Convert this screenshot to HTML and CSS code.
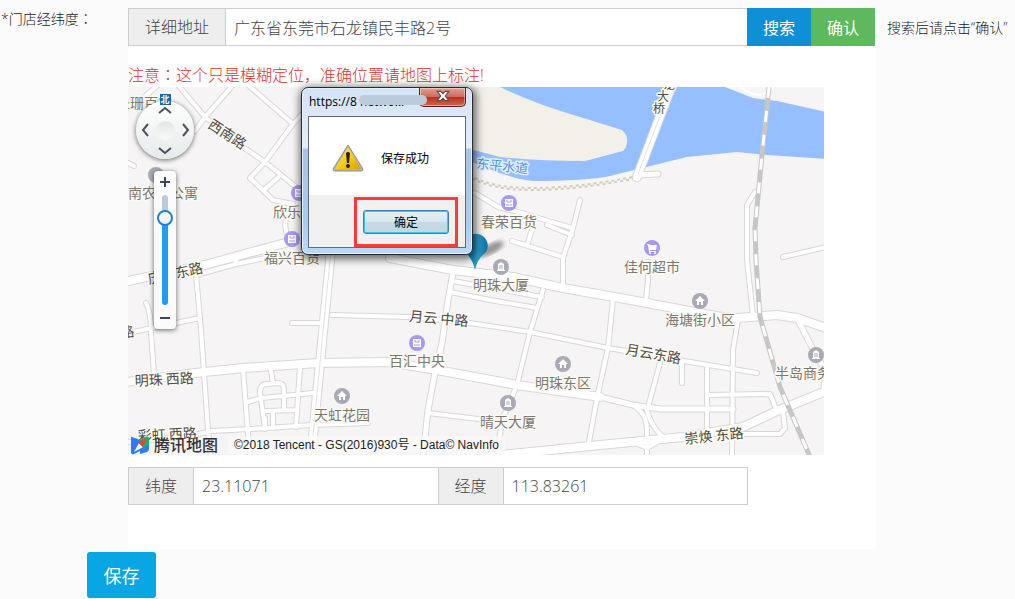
FILE: index.html
```html
<!DOCTYPE html>
<html lang="zh-CN">
<head>
    <meta charset="UTF-8">
    <meta name="viewport" content="width=device-width, initial-scale=1.0">
    <link rel="stylesheet" href="styles.css">
    <title>门店经纬度</title>
</head>
<body>
    <form class="store-form">
        <div class="form-row">
            <label class="form-label" for="address">*门店经纬度<span class="colon" lang="zh-TW">：</span></label>

            <div class="panel">
                <div class="input-group">
                    <label class="addon" for="address">详细地址</label>
                    <input type="text" id="address" value="广东省东莞市石龙镇民丰路2号">
                    <button type="button" class="btn btn-search">搜索</button>
                    <button type="button" class="btn btn-confirm">确认</button>
                </div>

                <p class="notice">注意<span class="colon" lang="zh-TW">：</span>这个只是模糊定位，准确位置请地图上标注!</p>

                <div class="map">
                    <svg class="map-canvas" viewBox="128 87 696 368">
                        <defs>
                            <filter id="soft"><feGaussianBlur stdDeviation="2"/></filter>
                            <linearGradient id="pinFill" x1="0" x2="1" y1="0" y2="0">
                                <stop offset="0" stop-color="#0d6fa5"/>
                                <stop offset="0.6" stop-color="#2c9fce"/>
                                <stop offset="1" stop-color="#0b6c9f"/>
                            </linearGradient>
                            <g id="streets">
                                <g class="lane">
                                    <path d="M158 85L140 101M128 163L134 166M178 85L205 117L243 147L265 162L306 195"/>
                                    <path d="M233 85L205 117L195 131M248 85L293 124M304 112L293 124L265 162L250 178L273 200L293 204M281 175L265 189"/>
                                    <path d="M286 218Q284 230 288 236M196 275L236 264L270 257M236 256V263"/>
                                    <path d="M196 274L201 330L208 430L211 457M146 303Q151 312 151 332L154 375M128 333L200 318M292 323H322"/>
                                    <path d="M332 315L410 317L463 322L530 332L608 348L678 360L757 373"/>
                                    <path d="M243 370L250 457M247 402L262 398L313 393M300 368L296 427M271 370L273 383M265 428L260 393Q260 384 266 384L278 383Q284 383 284 390V408M265 411L296 410M273 411V426M265 418V429"/>
                                    <path d="M128 442L195 435L211 431L268 428L311 425L368 423"/>
                                    <path d="M475 193L498 207L515 211L572 228M547 225L572 235M532 230L527 245M512 241L563 257M580 200L573 228L563 258V286"/>
                                    <path d="M453 281L542 297M450 292L490 300L537 308M543 290L530 332L517 385L502 420L497 457M428 413L487 420"/>
                                    <path d="M613 300L608 348L597 398L589 442M648 262V280L646 300M660 363L648 407M682 363V383M707 367V432"/>
                                    <path d="M755 192L747 205V260L753 316M783 257L826 247M738 320L733 350L732 457M707 395L770 394L777 411M783 412L785 428L780 434H743"/>
                                    <path d="M633 405Q647 414 647 430V457M646 407Q650 426 664 438M664 438L647 448L630 441"/>
                                </g>
                                <g class="road">
                                    <path d="M453 273L448 300L442 343L435 373L428 410L423 457"/>
                                    <path d="M600 397L633 405L660 409L733 409M797 318L817 357Q828 372 824 387M637 175L658 174"/>
                                </g>
                                <g class="avenue">
                                    <path d="M128 281L205 265L285 243L330 230M390 258L453 270L513 277L563 288L620 298L647 303L705 314Q725 318 737 318L777 315L797 318L826 328"/>
                                    <path d="M126 382L195 373L243 368L318 363L388 362L437 370L517 385L600 397"/>
                                    <path d="M490 456L600 445L683 437L743 427L777 411L826 391"/>
                                    <path d="M332 240L320 363L311 457M672 85L637 177"/>
                                </g>
                            </g>
                        </defs>

                        <rect class="land" x="128" y="87" width="696" height="368"/>
                        <path class="water" d="M470 87H725L753 98L777 101L826 112V159L767 155L737 152L687 157L610 176Q585 181 533 181Q510 179 470 161Z"/>
                        <path class="island" d="M470 87H500Q535 104 580 117L622 130Q628 136 627 141Q627 148 623 151L585 161Q540 161 500 157L470 149Z"/>
                        <path class="footpath" d="M470 175Q490 188 533 188T633 177"/>
                        <path class="footpath alt" d="M470 177Q490 190 533 190T633 179"/>
                        <path class="shore" d="M740 87Q762 103 774 86"/>

                        <use href="#streets" class="casing"/>
                        <use href="#streets" class="surface"/>
                        <path class="divider" d="M332 240L320 363L311 457M671 87L638 174"/>

                        <path class="rail" d="M769 87L762 155L755 228L756 260L760 317L780 387L810 457"/>
                        <path class="rail-dash" d="M769 87L762 155L755 228L756 260L760 317L780 387L810 457"/>

                        <!-- 图标 -->
                        <g class="poi shop">
                            <g id="bag">
                                <circle cx="299" cy="193" r="8"/>
                                <path class="glyph" d="M295 189H303V197H295Z"/>
                                <path class="clasp" d="M297 190V192H301V190M296 195H302"/>
                            </g>
                            <use href="#bag" x="-7" y="46"/>
                            <use href="#bag" x="210" y="10"/>
                            <use href="#bag" x="118" y="150"/>
                            <circle cx="652" cy="248" r="8"/>
                            <path class="glyph" d="M647 244H649L650 245H657L656 250H650V251H656V252H649L648 245H647Z"/>
                            <circle class="glyph" cx="650" cy="253" r="1"/>
                            <circle class="glyph" cx="655" cy="253" r="1"/>
                        </g>
                        <g class="poi place">
                            <circle cx="156" cy="175" r="8"/>
                            <g id="home">
                                <circle cx="700" cy="301" r="8"/>
                                <path class="glyph" d="M700 296L695 301H697V305H699V302H701V305H703V301H705Z"/>
                            </g>
                            <use href="#home" x="-137" y="63"/>
                            <use href="#home" x="-358" y="95"/>
                            <g id="tower">
                                <circle cx="501" cy="267" r="8"/>
                                <path class="glyph" d="M497 271V270H498V264L501 262L504 264V270H505V271Z"/>
                                <path class="mark" d="M500 265V269M502 265V269"/>
                            </g>
                            <use href="#tower" x="315" y="88"/>
                            <use href="#tower" x="7" y="136"/>
                        </g>

                        <!-- 地名 -->
                        <g class="name">
                            <text x="116" y="108">圣珊百货</text>
                            <text x="128" y="198">南农民公寓</text>
                            <text x="273" y="217">欣乐百货</text>
                            <text x="264" y="263">福兴百货</text>
                            <text x="481" y="227">春荣百货</text>
                            <text x="624" y="272">佳何超市</text>
                            <text x="473" y="290">明珠大厦</text>
                            <text x="389" y="366">百汇中央</text>
                            <text x="535" y="388">明珠东区</text>
                            <text x="480" y="427">晴天大厦</text>
                            <text x="314" y="420">天虹花园</text>
                            <text x="665" y="325">海塘街小区</text>
                            <text x="775" y="378">半岛商务</text>
                        </g>
                        <g class="street-name">
                            <text transform="translate(207 127) rotate(33)">西南路</text>
                            <text transform="translate(149 284) rotate(-12)">庆丰东路</text>
                            <text transform="translate(121 338) rotate(-8)">路</text>
                            <text transform="translate(135 386) rotate(-3)">明珠 西路</text>
                            <text transform="translate(138 441) rotate(-3)">彩虹 西路</text>
                            <text transform="translate(409 321) rotate(5)">月云 中路</text>
                            <text transform="translate(625 354) rotate(10)">月云东路</text>
                            <text transform="translate(685 444) rotate(-6)">崇焕 东路</text>
                            <g class="bridge-name">
                                <text x="663" y="89">龙</text>
                                <text x="657" y="101">大</text>
                                <text x="653" y="113">桥</text>
                            </g>
                        </g>
                        <text class="river-name" transform="translate(476 168) rotate(6)">东平水道</text>

                        <!-- 标注点 -->
                        <ellipse class="pin-shadow" cx="491" cy="249" rx="14" ry="5" transform="rotate(-28 491 249)"/>
                        <path fill="url(#pinFill)" d="M475 270Q473 261 468 255A12 12 0 1 1 486 252Q477 259 475 270Z"/>
                    </svg>

                    <div class="map-controls">
                        <span class="north">北</span>
                        <div class="compass">
                            <button type="button" class="pan up" aria-label="向上"><svg viewBox="0 0 14 8"><path d="M1 7L7 2L13 7"/></svg></button>
                            <button type="button" class="pan left" aria-label="向左"><svg viewBox="0 0 8 14"><path d="M7 1L2 7L7 13"/></svg></button>
                            <span class="hub"></span>
                            <button type="button" class="pan right" aria-label="向右"><svg viewBox="0 0 8 14"><path d="M1 1L6 7L1 13"/></svg></button>
                            <button type="button" class="pan down" aria-label="向下"><svg viewBox="0 0 14 8"><path d="M1 1L7 6L13 1"/></svg></button>
                        </div>
                        <div class="zoom">
                            <button type="button" class="zoom-in" aria-label="放大"><svg viewBox="0 0 10 10"><path d="M0 5H10M5 0V10"/></svg></button>
                            <input type="range" min="0" max="100" value="84" aria-label="缩放级别">
                            <button type="button" class="zoom-out" aria-label="缩小"><svg viewBox="0 0 10 10"><path d="M0 5H10"/></svg></button>
                        </div>
                    </div>

                    <div class="map-credit">
                        <svg class="map-logo" viewBox="0 0 19 19">
                            <path fill="#2f7df6" d="M1 1L9 4V15L3 18Q0 19 0 16V2Q0 0 1 1Z"/>
                            <path fill="#2f7df6" d="M9 12L18 8V13Q18 15 16 16L9 18Z"/>
                            <path fill="#19b16b" d="M9 4L15 1Q18 0 18 3V9L9 13Z"/>
                            <path fill="#fff" d="M3 16L8 7L12 11Z"/>
                            <path fill="#f0432f" d="M16 2L7 7L12 11Z"/>
                        </svg>
                        <span class="map-brand">腾讯地图</span>
                        <span class="map-copy">©2018 Tencent - GS(2016)930号 - Data© NavInfo</span>
                    </div>

                    <div class="dialog" role="alertdialog" aria-labelledby="dialogText">
                        <div class="dialog-bar">
                            <span class="dialog-title">https://8 netwo...</span>
                            <button type="button" class="dialog-close" aria-label="关闭">
                                <svg viewBox="0 0 12 10"><path d="M1 1H4L6 3L8 1H11L8 5L11 9H8L6 7L4 9H1L4 5Z"/></svg>
                            </button>
                        </div>
                        <div class="dialog-body">
                            <div class="dialog-message">
                                <svg class="warning" viewBox="0 0 32 28">
                                    <defs>
                                        <linearGradient id="warnFill" x1="0" x2="1" y1="0" y2="1">
                                            <stop offset="0" stop-color="#ffe95a"/>
                                            <stop offset="0.5" stop-color="#f8d211"/>
                                            <stop offset="1" stop-color="#dc9c00"/>
                                        </linearGradient>
                                    </defs>
                                    <path fill="#b5b5b5" stroke="#8d8d8d" stroke-linejoin="round" d="M16 1L31 25Q31 27 29 27H3Q1 27 1 25Z"/>
                                    <path fill="url(#warnFill)" d="M16 3L29 25H3Z"/>
                                    <path fill="#222" d="M14 9Q16 7 18 9L17 19H15Z"/>
                                    <circle cx="16" cy="22" r="2" fill="#222"/>
                                </svg>
                                <span id="dialogText">保存成功</span>
                            </div>
                            <div class="dialog-actions">
                                <div class="highlight">
                                    <button type="button" class="dialog-ok">确定</button>
                                </div>
                            </div>
                        </div>
                    </div>
                </div>

                <div class="input-group coords">
                    <label class="addon" for="lat">纬度</label>
                    <input type="text" id="lat" value="23.11071">
                    <label class="addon" for="lng">经度</label>
                    <input type="text" id="lng" value="113.83261">
                </div>
            </div>

            <span class="hint">搜索后请点击“确认”</span>
        </div>

        <button type="submit" class="btn-save">保存</button>
    </form>
</body>
</html>
```

FILE: styles.css
```css
* {
    box-sizing: border-box;
}

body {
    margin: 0;
    background-color: #fbfbfb;
    color: #222;
    font-family: "Open Sans", "Noto Sans CJK SC", sans-serif;
    font-size: 14px;
    font-weight: 300;
}

button, input {
    font-family: inherit;
    font-weight: inherit;
    margin: 0;
}

button {
    border: none;
    padding: 0;
    cursor: pointer;
}

/* 表单 */
.store-form {
    padding-top: 8px;
}

.form-row {
    display: grid;
    grid-template-columns: 128px minmax(0, 1fr) 139px;
}

.form-label {
    padding-left: 1px;
    line-height: 22px;
    white-space: nowrap;
}

/* 居中的冒号 */
.colon {
    font-family: "Noto Sans CJK TC", sans-serif;
    line-height: 1;
}

.hint {
    padding-left: 11px;
    line-height: 40px;
    white-space: nowrap;
}

.panel {
    background-color: #fff;
    padding-bottom: 44px;
}

.input-group {
    display: flex;
    height: 38px;
    margin-right: 1px;
    font-size: 16px;
    color: #444;
}

.addon {
    background-color: #eee;
    border: 1px solid #ccc;
    border-right: none;
    padding: 0 16px;
    line-height: 36px;
    white-space: nowrap;
}

.input-group input {
    flex: 1;
    min-width: 0;
    border: 1px solid #ccc;
    padding: 0 8px;
    background-color: #fff;
    color: #444;
    font-size: 16px;
}

.input-group input:not(:last-child) {
    border-right: none;
}

.btn {
    width: 64px;
    color: #fff;
    font-size: 16px;
    font-weight: 400;
}

.btn-search {
    background-color: #0f8fd5;
}

.btn-confirm {
    background-color: #5eb85e;
}

.notice {
    margin: 0;
    padding-top: 17px;
    color: #db3430;
    font-size: 16px;
    line-height: 24px;
}

.coords {
    margin: 12px 128px 0 0;
}

.btn-save {
    display: block;
    width: 69px;
    height: 46px;
    margin: 3px 0 0 87px;
    border-radius: 3px;
    background-color: #08a6e2;
    color: #fff;
    font-size: 18px;
    font-weight: 400;
}

/* 地图 */
.map {
    position: relative;
    margin-right: 52px;
}

.map-canvas {
    display: block;
    width: 100%;
    height: auto;
}

.land {
    fill: #f6f4f5;
}

.water {
    fill: #96bfff;
}

.island {
    fill: #f3f0e9;
}

.footpath {
    fill: none;
    stroke: #d5ccba;
    stroke-width: 2px;
    stroke-dasharray: 3 3;
}

.footpath.alt {
    stroke-dashoffset: 3px;
}

.shore {
    fill: none;
    stroke: #fff;
    stroke-width: 2px;
}

.casing, .surface {
    fill: none;
    stroke-linecap: round;
    stroke-linejoin: round;
}

.casing {
    --edge: 2px;
    stroke: #d8d7d7;
}

.surface {
    --edge: 0px;
    stroke: #fff;
}

.lane {
    stroke-width: calc(4px + var(--edge));
}

.road {
    stroke-width: calc(5px + var(--edge));
}

.avenue {
    stroke-width: calc(8px + var(--edge));
}

.divider {
    fill: none;
    stroke: #e2e2e2;
    stroke-width: 1px;
}

.rail {
    fill: none;
    stroke: #c6c6c6;
    stroke-width: 5px;
}

.rail-dash {
    fill: none;
    stroke: #fff;
    stroke-width: 3px;
    stroke-dasharray: 11 13;
}

.shop {
    fill: #a698f3;
}

.place {
    fill: #a9aab5;
}

.glyph {
    fill: #fff;
}

.clasp {
    fill: none;
    stroke: #a698f3;
    stroke-width: 1px;
}

.mark {
    stroke: #a9aab5;
    stroke-width: 1px;
}

.name, .street-name, .river-name {
    font-family: "Noto Sans CJK SC", sans-serif;
    font-size: 14px;
    font-weight: 400;
    paint-order: stroke;
    stroke: #fbfaf3;
    stroke-width: 3px;
    stroke-linejoin: round;
}

.name {
    fill: #7d7870;
}

.street-name {
    fill: #504c46;
}

.bridge-name {
    font-size: 12px;
}

.river-name {
    fill: #4b93d2;
    font-size: 13px;
    stroke: #e4f0ff;
}

.pin-shadow {
    fill: #555;
    opacity: 0.6;
    filter: url(#soft);
}

/* 地图控件 */
.map-controls {
    position: absolute;
    top: 7px;
    left: 8px;
    display: flex;
    flex-direction: column;
    align-items: center;
    width: 58px;
}

.north {
    width: 11px;
    height: 11px;
    background-color: #1769a6;
    color: #fff;
    font-size: 9px;
    font-weight: 700;
    line-height: 11px;
    text-align: center;
    z-index: 1;
}

.compass {
    display: grid;
    grid-template: 17px 24px 17px / 17px 24px 17px;
    grid-template-areas: ". up ." "left hub right" ". down .";
    place-items: center;
    width: 58px;
    height: 58px;
    margin-top: -4px;
    border-radius: 50%;
    background: linear-gradient(#fff, #e6eaea);
    box-shadow: 0 1px 5px rgba(0, 0, 0, 0.6);
}

.pan {
    display: flex;
    background: none;
}

.pan svg {
    width: 14px;
    height: 14px;
    fill: none;
    stroke: #4a5160;
    stroke-width: 2px;
}

.up { grid-area: up; }
.left { grid-area: left; }
.right { grid-area: right; }
.down { grid-area: down; }

.hub {
    grid-area: hub;
    width: 19px;
    height: 19px;
    border-radius: 50%;
    background: linear-gradient(#e2e6e6, #fafafa);
}

.zoom {
    display: flex;
    flex-direction: column;
    align-items: center;
    width: 22px;
    margin-top: 12px;
    border-radius: 4px;
    background-color: #fbfbfb;
    box-shadow: 0 1px 5px rgba(0, 0, 0, 0.6);
}

.zoom button {
    display: flex;
    align-items: center;
    justify-content: center;
    width: 22px;
    height: 24px;
    background: none;
}

.zoom .zoom-in {
    padding-bottom: 3px;
}

.zoom .zoom-out {
    padding-top: 2px;
}

.zoom svg {
    width: 10px;
    height: 10px;
    stroke: #40475a;
    stroke-width: 2px;
}

.zoom input {
    appearance: none;
    writing-mode: vertical-lr;
    direction: rtl;
    width: 16px;
    height: 110px;
    background: none;
}

.zoom input::-webkit-slider-runnable-track {
    width: 6px;
    border-radius: 3px;
    background: linear-gradient(#bccbdc 20%, #259bee 20%);
}

.zoom input::-webkit-slider-thumb {
    appearance: none;
    width: 16px;
    height: 16px;
    margin-left: -5px;
    border: 2px solid #2480cc;
    border-radius: 50%;
    background: linear-gradient(#fff, #ececec);
}

.map-credit {
    position: absolute;
    left: 3px;
    bottom: 0;
    display: flex;
    align-items: center;
    height: 20px;
    color: #222;
    white-space: nowrap;
}

.map-logo {
    width: 19px;
    height: 19px;
}

.map-brand {
    margin: 0 10px 0 4px;
    color: #333;
    font-size: 16px;
    font-weight: 500;
    line-height: 20px;
}

.map-copy {
    padding: 0 6px;
    background-color: rgba(250, 250, 250, 0.7);
    font-family: "Liberation Sans", "Noto Sans CJK SC", sans-serif;
    font-size: 12px;
    font-weight: 400;
    line-height: 18px;
}

/* 提示框 */
.dialog {
    position: absolute;
    top: 0;
    left: 173px;
    width: 172px;
    padding: 0 6px 6px;
    border: 1px solid #222b36;
    border-radius: 7px;
    background: linear-gradient(#d3e3f6, #e6edf6 36%, #a6c4e8 37%, #a9cbf2 80%, #bcd8f7);
    box-shadow: inset 0 0 0 1px #e8f2fc, 1px 2px 9px 2px rgba(0, 0, 0, 0.6);
    color: #000;
    font-size: 12px;
    font-weight: 400;
}

.dialog-bar {
    position: relative;
    height: 28px;
}

.dialog-title {
    padding-left: 1px;
    line-height: 28px;
    white-space: nowrap;
}

/* 遮住域名的涂抹块 */
.dialog-title::after {
    content: "";
    position: absolute;
    top: 7px;
    left: 51px;
    width: 68px;
    height: 10px;
    border-radius: 5px;
    background-color: #bccbdb;
    z-index: 1;
}

.dialog-close {
    position: absolute;
    top: 0;
    right: 0;
    width: 47px;
    height: 19px;
    border: 1px solid #5a2420;
    border-top: none;
    border-radius: 0 0 5px 5px;
    background: linear-gradient(#e2a091, #cf6b5b 48%, #b52e1d 50%, #cf6a4f);
    box-shadow: inset 0 0 0 1px rgba(255, 255, 255, 0.4);
}

.dialog-close svg {
    width: 14px;
    height: 12px;
    fill: #fff;
    stroke: #5b4a58;
    stroke-width: 1px;
    overflow: visible;
}

.dialog-body {
    border: 1px solid #5d6b7c;
    background-color: #f0f0f0;
}

.dialog-message {
    display: flex;
    align-items: center;
    gap: 17px;
    height: 78px;
    padding: 4px 0 0 23px;
    background-color: #fff;
}

.warning {
    width: 32px;
    height: 28px;
}

.dialog-actions {
    display: flex;
    justify-content: flex-end;
    padding: 2px 7px 0 0;
}

.highlight {
    padding: 10px 6px;
    border: 3px solid #fb3a3a;
}

.dialog-ok {
    display: block;
    width: 86px;
    height: 24px;
    border: 1px solid #3c7fb1;
    border-radius: 3px;
    background: linear-gradient(#e6f0f5, #d9e6ed 48%, #c6d9e4 50%, #c3d8e3);
    box-shadow: inset 0 0 0 1px #3fc4f0;
    font-size: 12px;
}
```
